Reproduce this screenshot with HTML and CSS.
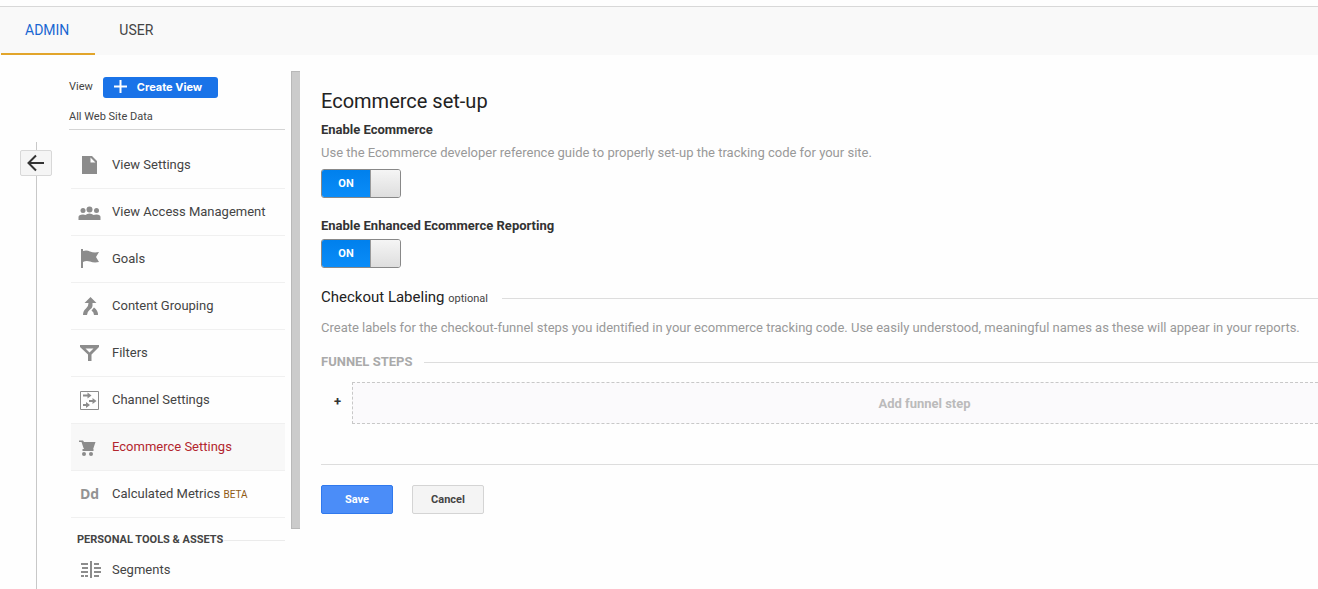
FILE: index.html
```
<!DOCTYPE html>
<html lang="en">
<head>
    <meta charset="UTF-8">
    <meta name="viewport" content="width=device-width, initial-scale=1.0">
    <title>Ecommerce set-up</title>
    <link rel="stylesheet" href="styles.css">
</head>
<body>
    <header class="header">
        <nav class="tabs">
            <a href="#" class="tab active">ADMIN</a>
            <a href="#" class="tab">USER</a>
        </nav>
    </header>

    <div class="layout">
        <div class="rail">
            <button class="back-button" aria-label="Back">
                <svg width="18" height="18" viewBox="0 0 18 18" fill="none" stroke="#333" stroke-width="2">
                    <path d="M17 9H2M9 1.500L1.500 9L9 16.500"/>
                </svg>
            </button>
        </div>

        <aside class="sidebar">
            <div class="view-panel">
                <div class="view-column">
                    <div class="view-header">
                        <span class="view-label">View</span>
                        <button class="create-button">
                            <svg width="13" height="13" viewBox="0 0 13 13" stroke="#fff" stroke-width="2">
                                <path d="M6.500 0V13M0 6.500H13"/>
                            </svg>
                            Create View
                        </button>
                    </div>
                    <div class="view-name">All Web Site Data</div>

                    <nav class="menu">
                        <a href="#" class="menu-item">
                            <svg class="icon" viewBox="0 0 23 23"><path d="M4 2H14L19 7V20H4ZM12.500 3.500V8.500H17.500Z" fill-rule="evenodd"/></svg>
                            View Settings
                        </a>
                        <a href="#" class="menu-item">
                            <svg class="icon" viewBox="0 0 23 23">
                                <circle cx="5" cy="9.500" r="2.500"/><circle cx="11.500" cy="8.500" r="3"/><circle cx="18.500" cy="9.500" r="2.500"/>
                                <path d="M0.500 19V16Q0.500 13.500 5 13.500Q6.500 13.500 7.500 14Q9 12.500 11.500 12.500Q14 12.500 15.500 14Q16.500 13.500 18.500 13.500Q22.500 13.500 22.500 16V19Z"/>
                            </svg>
                            View Access Management
                        </a>
                        <a href="#" class="menu-item">
                            <svg class="icon" viewBox="0 0 23 23"><path d="M3 1H5V3Q9 2 12 3.500Q16 5 21 4L18 9L21 14Q16 15 12 13.500Q8 12.500 5 14V20H3Z"/></svg>
                            Goals
                        </a>
                        <a href="#" class="menu-item">
                            <svg class="icon" viewBox="0 0 23 23">
                                <path d="M12.500 2L18.500 8H14.500V11Q14.500 13 11.500 15Q9 17 9 20H5Q5 15.500 8 13.500Q10.500 11.500 10.500 8H6.500Z"/>
                                <path d="M13.500 15.500L16 12.500Q20 15 20 20H16Q16 17 13.500 15.500Z"/>
                            </svg>
                            Content Grouping
                        </a>
                        <a href="#" class="menu-item">
                            <svg class="icon" viewBox="0 0 23 23"><path d="M2 3H21V5L13.500 12.500V19H10V12.500L2 5ZM7.500 6.500L11.500 10.500L15.500 6.500Z" fill-rule="evenodd"/></svg>
                            Filters
                        </a>
                        <a href="#" class="menu-item">
                            <svg class="icon" viewBox="0 0 23 23">
                                <path d="M2.500 2.500H20.500V20.500H2.500Z" fill="none" stroke="#8c8c8c"/>
                                <path d="M5 5.500H9.500V3.500L13.500 6.500L9.500 9.500V7.500H5ZM11 11H14.500V9L18.500 12L14.500 15V13H11ZM5 15H8V13L12 16L8 19V17H5Z"/>
                            </svg>
                            Channel Settings
                        </a>
                        <a href="#" class="menu-item selected">
                            <svg class="icon" viewBox="0 0 23 23">
                                <path d="M1 4.500H5L6 6H17.500L15 13.500H6.500L5.500 12L3.500 6H1ZM4.500 13H15.500V15H4.500Z"/>
                                <circle cx="6" cy="18" r="2"/><circle cx="13" cy="18" r="2"/>
                            </svg>
                            Ecommerce Settings
                        </a>
                        <a href="#" class="menu-item">
                            <span class="icon-text">Dd</span>
                            <span>Calculated Metrics <span class="beta">BETA</span></span>
                        </a>
                    </nav>
                </div>
                <div class="scrollbar"></div>
            </div>

            <h2 class="tools-title"><span>PERSONAL TOOLS &amp; ASSETS</span></h2>
            <a href="#" class="menu-item segments">
                <svg class="icon" viewBox="0 0 23 23" fill="none" stroke="#8c8c8c" stroke-width="2">
                    <path d="M13 2V19"/>
                    <path d="M3 5H10M4 9H10M3 13H10M3 17H6M7 17H10M16 5H21M16 9H23M16 13H23M16 17H21"/>
                </svg>
                Segments
            </a>
        </aside>

        <main class="content">
            <h1 class="title">Ecommerce set-up</h1>

            <section class="setting">
                <h2 class="setting-title" id="ecommerceTitle">Enable Ecommerce</h2>
                <p class="description">Use the Ecommerce developer reference guide to properly set-up the tracking code for your site.</p>
                <label class="switch">
                    <input type="checkbox" aria-labelledby="ecommerceTitle" checked>
                    <span class="switch-on">ON</span>
                    <span class="switch-handle"></span>
                </label>
            </section>

            <section class="setting">
                <h2 class="setting-title" id="enhancedTitle">Enable Enhanced Ecommerce Reporting</h2>
                <label class="switch">
                    <input type="checkbox" aria-labelledby="enhancedTitle" checked>
                    <span class="switch-on">ON</span>
                    <span class="switch-handle"></span>
                </label>
            </section>

            <h2 class="checkout-title">
                <span>Checkout Labeling <small class="optional">optional</small></span>
            </h2>
            <p class="description">Create labels for the checkout-funnel steps you identified in your ecommerce tracking code. Use easily understood, meaningful names as these will appear in your reports.</p>

            <h3 class="funnel-title">FUNNEL STEPS</h3>
            <div class="funnel-row">
                <span class="plus">+</span>
                <button class="add-step">Add funnel step</button>
            </div>

            <div class="actions">
                <button class="button save">Save</button>
                <button class="button cancel">Cancel</button>
            </div>
        </main>
    </div>
</body>
</html>
```
FILE: styles.css
```
* {
    box-sizing: border-box;
    margin: 0;
    padding: 0;
}

body {
    font-family: Roboto, Arial, sans-serif;
    font-size: 13px;
    line-height: 20px;
    color: #444;
    background: #fefefe;
    min-height: 100vh;
    display: flex;
    flex-direction: column;
    padding-top: 6px;
    overflow-x: hidden;
}

a {
    color: inherit;
    text-decoration: none;
}

button {
    font-family: inherit;
    cursor: pointer;
}

.header {
    background: #f9f9f9;
    border-top: 1px solid #d8d8d8;
}

.tabs {
    display: flex;
    padding-left: 1px;
}

.tab {
    padding: 13px 26px 13px 24px;
    height: 48px;
    font-size: 14px;
    border-bottom: 2px solid transparent;
}

.tab.active {
    color: #1967d2;
    border-bottom-color: #e2a52b;
}

.layout {
    display: flex;
    flex: 1;
}

/* Back button on its vertical line */
.rail {
    width: 32px;
    margin: 87px 17px 0 20px;
    padding-top: 8px;
    background: linear-gradient(#c8c8c8, #c8c8c8) 16px 0 / 1px 100% no-repeat;
}

.back-button {
    width: 32px;
    height: 26px;
    display: flex;
    align-items: center;
    justify-content: center;
    background: #f5f5f5;
    border: 1px solid #d8d8d8;
    border-radius: 2px;
}

.sidebar {
    width: 231px;
    padding-top: 16px;
    flex-shrink: 0;
}

.view-panel {
    display: flex;
    gap: 6px;
}

.view-column {
    flex: 1;
    padding: 6px 0 11px;
}

.scrollbar {
    width: 9px;
    background: #cbcbcb;
    border: 1px solid #b8b8b8;
    border-right: none;
}

.view-header {
    display: flex;
    align-items: flex-start;
    gap: 10px;
    font-size: 11px;
}

.create-button {
    display: flex;
    align-items: center;
    gap: 10px;
    height: 21px;
    padding: 0 16px 2px 11px;
    background: #1a73e8;
    color: #fff;
    border: none;
    border-radius: 3px;
    font-family: Inter, sans-serif;
    font-size: 11px;
    font-weight: 700;
}

.view-name {
    font-size: 11px;
    padding: 9px 0 2px;
    border-bottom: 1px solid #d4d4d4;
}

.menu {
    padding: 12px 0 0 2px;
}

.menu-item {
    display: flex;
    align-items: center;
    gap: 11px;
    height: 47px;
    padding-left: 7px;
    border-bottom: 1px solid #f0f0f0;
}

.menu-item.selected {
    background: #f8f8f8;
    color: #b3262e;
}

.icon {
    width: 23px;
    height: 23px;
    fill: #8c8c8c;
}

.icon-text {
    width: 23px;
    text-align: center;
    font-family: "Open Sans", sans-serif;
    font-size: 14px;
    font-weight: 700;
    color: #939393;
}

.beta {
    font-size: 10px;
    color: #8f5a14;
}

.tools-title {
    display: flex;
    align-items: center;
    margin: 0 15px 0 2px;
    padding: 1px 0 0 6px;
    font-size: 11px;
    font-weight: 700;
}

.tools-title::after {
    content: "";
    flex: 1;
    height: 1px;
    background: #ebebeb;
}

.menu-item.segments {
    height: 40px;
    padding-left: 9px;
    border: none;
}

.content {
    flex: 1;
    min-width: 0;
    padding: 34px 0 20px 21px;
}

.title {
    font-size: 20px;
    font-weight: 400;
    line-height: 24px;
    color: #222;
    margin-bottom: 7px;
}

.setting {
    margin-bottom: 18px;
}

.setting-title {
    font-size: 13px;
    font-weight: 700;
    color: #333;
    margin-bottom: 3px;
}

.description {
    color: #999;
    margin-bottom: 6px;
}

.switch {
    position: relative;
    display: flex;
    width: 80px;
    height: 29px;
    border: 1px solid #888;
    border-radius: 3px;
    overflow: hidden;
    cursor: pointer;
}

.switch input {
    position: absolute;
    inset: 0;
    opacity: 0;
    cursor: pointer;
}

.switch-on {
    width: 48px;
    background: linear-gradient(#0080ed, #0a8cf8);
    color: #fff;
    font-size: 11px;
    font-weight: 700;
    line-height: 27px;
    text-align: center;
}

.switch-handle {
    flex: 1;
    border-left: 1px solid #999;
    background: linear-gradient(#f5f5f5, #dedede);
}

.checkout-title {
    display: flex;
    align-items: center;
    gap: 14px;
    margin: 19px 0 9px;
    font-size: 15px;
    font-weight: 400;
    color: #222;
}

.checkout-title::after,
.funnel-title::after {
    content: "";
    flex: 1;
    height: 1px;
    background: #ddd;
}

.optional {
    font-size: 11px;
    color: #444;
}

.funnel-title {
    display: flex;
    align-items: center;
    gap: 12px;
    margin: 14px 0 10px;
    font-size: 13px;
    font-weight: 700;
    color: #aaa;
}

.funnel-row {
    display: flex;
    align-items: center;
    padding-bottom: 40px;
    border-bottom: 1px solid #ddd;
}

.plus {
    width: 31px;
    padding: 0 0 3px 13px;
    font-weight: 700;
    color: #333;
}

.add-step {
    flex: 1;
    height: 42px;
    padding-left: 178px;
    background: #fbfafc;
    border: 1px dashed #c8c8c8;
    border-right: none;
    color: #bbb;
    font-size: 13px;
    font-weight: 700;
}

.actions {
    display: flex;
    gap: 19px;
    padding-top: 20px;
}

.button {
    width: 72px;
    height: 29px;
    border-radius: 2px;
    font-size: 11px;
    font-weight: 700;
}

.save {
    background: #4b8df8;
    border: 1px solid #3079ed;
    color: #fff;
}

.cancel {
    background: #f4f4f4;
    border: 1px solid #d4d4d4;
    color: #444;
}
```
